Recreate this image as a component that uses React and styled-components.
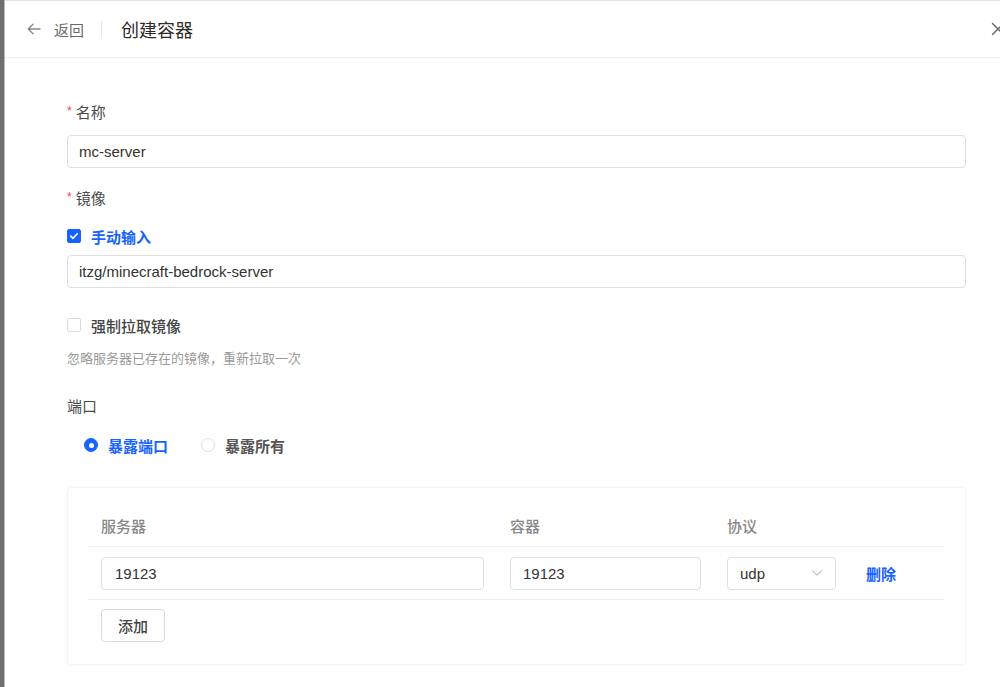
import React from "react";
import styled, { createGlobalStyle } from "styled-components";

const Global = createGlobalStyle`
  html, body { margin: 0; padding: 0; background: #fff; }
  body {
    width: 1000px; height: 687px; overflow: hidden;
    font-family: "Liberation Sans", "Noto Sans CJK SC", sans-serif;
    -webkit-font-smoothing: antialiased;
  }
  * { box-sizing: border-box; }
`;

const Page = styled.div`
  display: flex;
  height: 687px;
  width: 1000px;
  overflow: hidden;
`;

const Backdrop = styled.div`
  flex: 0 0 5px;
  background: #6f6f6f;
  border-right: 1px solid #b9b9b9;
`;

const Drawer = styled.div`
  flex: 0 0 1005px;
  display: flex;
  flex-direction: column;
  background: #fff;
  border-top: 1px solid #e6e6e6;
`;

const Header = styled.div`
  height: 57px;
  display: flex;
  align-items: center;
  padding-left: 22px;
  padding-right: 6px;
  border-bottom: 1px solid #eff0f2;
`;

const Back = styled.div`
  display: flex;
  align-items: center;
  gap: 13px;
  color: #6b6b6b;
  font-size: 15px;
`;

const Divider = styled.div`
  width: 1px;
  height: 16px;
  background: #e3e3e3;
  margin: 0 19px 0 17px;
`;

const Title = styled.div`
  font-size: 18px;
  color: #2b2b2b;
  flex: 1;
`;

const Close = styled.div`
  display: flex;
  align-items: center;
  color: #666;
`;

const Body = styled.div`
  padding: 45px 45px 0 62px;
  display: flex;
  flex-direction: column;
`;

const Label = styled.div`
  font-size: 15px;
  line-height: 20px;
  color: #4a4a4a;
  display: flex;
  align-items: center;
  margin-top: ${(p) => p.$mt || 0}px;
`;

const Star = styled.span`
  color: #f53f3f;
  font-size: 12px;
  margin-right: 4px;
  position: relative;
  top: -2px;
`;

const Input = styled.div`
  height: 33px;
  border: 1px solid #dedfe1;
  border-radius: 4px;
  display: flex;
  align-items: center;
  padding-left: ${(p) => p.$pl || 11}px;
  padding-right: 12px;
  font-size: 15px;
  color: #333;
  margin-top: ${(p) => p.$mt || 0}px;
  background: #fff;
  justify-content: space-between;
`;

const CheckRow = styled.label`
  display: flex;
  align-items: center;
  gap: 10px;
  height: 20px;
  font-size: 15px;
  color: ${(p) => (p.$active ? "#1664ff" : "#444")};
  font-weight: ${(p) => (p.$active ? 600 : 500)};
  margin-top: ${(p) => p.$mt || 0}px;
`;

const Box = styled.span`
  width: 14px;
  height: 14px;
  border-radius: 2px;
  display: inline-flex;
  align-items: center;
  justify-content: center;
  background: ${(p) => (p.$checked ? "#1664ff" : "#fff")};
  border: 1px solid ${(p) => (p.$checked ? "#1664ff" : "#dcdcdc")};
`;

const Help = styled.div`
  font-size: 13px;
  line-height: 18px;
  color: #9a9a9a;
  margin-top: 15px;
`;

const RadioGroup = styled.div`
  display: flex;
  align-items: center;
  gap: 33px;
  margin-top: 18px;
  padding-left: 17px;
  height: 20px;
`;

const RadioItem = styled.div`
  display: flex;
  align-items: center;
  gap: 10px;
  font-size: 15px;
  font-weight: 600;
  color: ${(p) => (p.$active ? "#1664ff" : "#555")};
`;

const Radio = styled.span`
  width: 14px;
  height: 14px;
  border-radius: 50%;
  display: inline-flex;
  align-items: center;
  justify-content: center;
  background: ${(p) => (p.$checked ? "#1664ff" : "#fff")};
  border: 1px solid ${(p) => (p.$checked ? "#1664ff" : "#e0e0e0")};
  &::after {
    content: "";
    display: ${(p) => (p.$checked ? "block" : "none")};
    width: 5px;
    height: 5px;
    border-radius: 50%;
    background: #fff;
  }
`;

const Card = styled.div`
  margin-top: 32px;
  width: 899px;
  border: 1px solid #f4f5f6;
  border-radius: 4px;
  box-shadow: 0 0 3px rgba(0, 0, 0, 0.03);
  padding: 17px 21px 22px 20px;
`;

const Row = styled.div`
  display: grid;
  grid-template-columns: 409px 217px 135px 1fr;
  align-items: center;
  height: ${(p) => p.$h}px;
  border-bottom: 1px solid #eceef1;
`;

const HeadCell = styled.div`
  padding-left: 13px;
  font-size: 15px;
  color: #888;
  font-weight: 500;
`;

const Cell = styled.div`
  padding: 0 13px;
`;

const DeleteLink = styled.span`
  padding-left: 17px;
  font-size: 15px;
  font-weight: 600;
  color: #1664ff;
`;

const Button = styled.div`
  margin: 9px 0 0 13px;
  width: 64px;
  height: 33px;
  border: 1px solid #dcdcdc;
  border-radius: 4px;
  display: flex;
  align-items: center;
  justify-content: center;
  font-size: 15px;
  color: #444;
  font-weight: 500;
`;

const Check = () => (
  <svg width="10" height="10" viewBox="0 0 10 10">
    <path d="M1.8 5.2 L4 7.3 L8.3 2.8" stroke="#fff" strokeWidth="1.6" fill="none" strokeLinecap="round" strokeLinejoin="round" />
  </svg>
);

export default function App() {
  return (
    <>
      <Global />
      <Page>
        <Backdrop />
        <Drawer>
          <Header>
            <Back>
              <svg width="14" height="12" viewBox="0 0 14 12">
                <path d="M13 6 H1.5 M6 1.2 L1.2 6 L6 10.8" stroke="#888" strokeWidth="1.3" fill="none" strokeLinecap="round" strokeLinejoin="round" />
              </svg>
              <span>返回</span>
            </Back>
            <Divider />
            <Title>创建容器</Title>
            <Close>
              <svg width="14" height="14" viewBox="0 0 14 14">
                <path d="M1.5 1.5 L12.5 12.5 M12.5 1.5 L1.5 12.5" stroke="#666" strokeWidth="1.4" strokeLinecap="round" />
              </svg>
            </Close>
          </Header>
          <Body>
            <Label><Star>*</Star>名称</Label>
            <Input $mt={12}>mc-server</Input>
            <Label $mt={21}><Star>*</Star>镜像</Label>
            <CheckRow $active $mt={17}>
              <Box $checked><Check /></Box>
              手动输入
            </CheckRow>
            <Input $mt={9}>itzg/minecraft-bedrock-server</Input>
            <CheckRow $mt={27}>
              <Box />
              强制拉取镜像
            </CheckRow>
            <Help>忽略服务器已存在的镜像，重新拉取一次</Help>
            <Label $mt={29}>端口</Label>
            <RadioGroup>
              <RadioItem $active><Radio $checked />暴露端口</RadioItem>
              <RadioItem><Radio />暴露所有</RadioItem>
            </RadioGroup>
            <Card>
              <Row $h={42}>
                <HeadCell>服务器</HeadCell>
                <HeadCell>容器</HeadCell>
                <HeadCell>协议</HeadCell>
                <HeadCell />
              </Row>
              <Row $h={53}>
                <Cell><Input $pl={13}>19123</Input></Cell>
                <Cell><Input $pl={12}>19123</Input></Cell>
                <Cell>
                  <Input $pl={12}>
                    udp
                    <svg width="12" height="8" viewBox="0 0 12 8">
                      <path d="M1 1.5 L6 6 L11 1.5" stroke="#c4c4c4" strokeWidth="1.1" fill="none" />
                    </svg>
                  </Input>
                </Cell>
                <DeleteLink>删除</DeleteLink>
              </Row>
              <Button>添加</Button>
            </Card>
          </Body>
        </Drawer>
      </Page>
    </>
  );
}
